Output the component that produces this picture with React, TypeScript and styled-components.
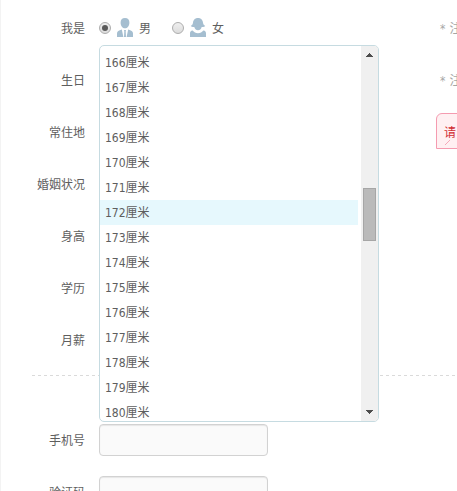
import React from "react";
import styled, { createGlobalStyle } from "styled-components";

const GlobalStyle = createGlobalStyle`
  * { box-sizing: border-box; }
  html, body { margin: 0; background: #fff; overflow: hidden; }
  body {
    font: 12px/18px "DejaVu Sans Condensed", "Noto Sans CJK SC", "Noto Sans", sans-serif;
    color: #5e5e5e;
  }
`;

const Page = styled.main`
  position: relative;
  width: 457px;
  height: 491px;
  padding-top: 2px;
  overflow: hidden;
  border-left: 1px solid #f3f3f3;
`;

const Row = styled.div`
  display: grid;
  grid-template-columns: 84px 324px 1fr;
  column-gap: 14px;
  height: 52px;
  align-items: center;
`;

const Label = styled.label`
  padding-top: 2px;
  text-align: right;
  white-space: nowrap;
`;

const Field = styled.div`
  position: relative;
  display: flex;
  align-items: center;
  height: 52px;
`;

const Hint = styled.span`
  display: flex;
  gap: 4px;
  margin-left: 3px;
  padding-top: 2px;
  color: #a6a6a6;
  white-space: nowrap;
`;

const Option = styled.label<{ $gap: number }>`
  display: flex;
  align-items: center;
  margin-right: ${(p) => p.$gap}px;
  svg { margin: 0 6px; }
`;

const OptionText = styled.span`
  padding-top: 2px;
`;

const Radio = styled.span<{ $checked?: boolean }>`
  display: grid;
  place-items: center;
  width: 12px;
  height: 12px;
  border: 1px solid #adadad;
  border-radius: 50%;
  background: linear-gradient(#efefef, #dcdcdc);
  &::after {
    content: "";
    width: 6px;
    height: 6px;
    border-radius: 50%;
    background: ${(p) => (p.$checked ? "#5a5a5a" : "transparent")};
  }
`;

const ErrorTip = styled.div`
  position: relative;
  width: 60px;
  height: 36px;
  margin: -2px 0 0 -1px;
  padding: 10px 0 0 7px;
  border: 1px solid #f59bb0;
  border-radius: 6px 0 0 0;
  background: #fff0f2;
  color: #d02c32;
  white-space: nowrap;
`;

const TipMark = styled.svg`
  position: absolute;
  left: 8px;
  bottom: 3px;
`;

const Divider = styled.div`
  height: 1px;
  margin: 9px 0 38px 31px;
  background: repeating-linear-gradient(90deg, #dadada 0 3px, transparent 3px 6px);
`;

const Input = styled.input`
  width: 169px;
  height: 32px;
  padding: 0 8px;
  border: 1px solid #d2d2d2;
  border-radius: 4px;
  background: #fafafa;
  box-shadow: inset 0 1px 1px #e6e6e6;
  outline: none;
`;

const Dropdown = styled.div`
  position: absolute;
  z-index: 2;
  top: 43px;
  left: 0;
  display: flex;
  width: 280px;
  height: 377px;
  border: 1px solid #c6dbe1;
  border-radius: 5px;
  background: #fff;
  overflow: hidden;
`;

const List = styled.ul`
  flex: 1;
  margin: 0 3px 0 0;
  padding: 4px 0 0;
  list-style: none;
`;

const Item = styled.li<{ $active: boolean }>`
  height: 25px;
  padding-left: 5px;
  line-height: 27px;
  background: ${(p) => (p.$active ? "#e6f8fd" : "transparent")};
`;

const Scrollbar = styled.div`
  display: flex;
  flex-direction: column;
  align-items: center;
  width: 17px;
  background: #f0f0f0;
`;

const Thumb = styled.div`
  width: 13px;
  height: 53px;
  margin: 125px 0 auto;
  border: 1px solid #a6a6a6;
  background: #bababa;
`;

const Arrow = styled.svg`
  flex: none;
  width: 17px;
  height: 17px;
`;

const ManIcon = () => (
  <svg width="16" height="20" viewBox="0 0 16 20" fill="#a5bed0">
    <path d="M8 0C5 0 3.5 2 3.6 4.7C3.7 7.8 5.6 10.3 8 10.3S12.3 7.8 12.4 4.7C12.5 2 11 0 8 0Z" />
    <path d="M4.8 11.6L6.4 19H0V15.5C0 13.4 1.8 12.5 4.8 11.6ZM11.2 11.6L9.6 19H16V15.5C16 13.4 14.2 12.5 11.2 11.6ZM7 12H9L8.7 13.4L9 19H7L7.3 13.4Z" />
  </svg>
);

const WomanIcon = () => (
  <svg width="16" height="20" viewBox="0 0 16 20" fill="#a5bed0">
    <path d="M8 0C4.7 0 3.2 2.2 3 4.8C2.8 6.5 2 7.2 .8 8C1.8 9 3 9 4.3 8.9C5 11.2 6.2 12.2 8 12.2S11 11.2 11.7 8.9C13 9 14.2 9 15.2 8C14 7.2 13.2 6.5 13 4.8C12.8 2.2 11.3 0 8 0Z" />
    <path d="M2.6 12.6C5 16 11 16 13.4 12.6C15.3 12.9 16 13.8 16 15.5V19H0V15.5C0 13.8 .7 12.9 2.6 12.6Z" />
  </svg>
);

const heights = Array.from({ length: 15 }, (_, i) => 166 + i);

export default function App() {
  return (
    <>
      <GlobalStyle />
      <Page>
        <Row>
          <Label>我是</Label>
          <Field>
            <Option $gap={21}><Radio $checked /><ManIcon /><OptionText>男</OptionText></Option>
            <Option $gap={0}><Radio /><WomanIcon /><OptionText>女</OptionText></Option>
            <Dropdown>
              <List>
                {heights.map((h) => (
                  <Item key={h} $active={h === 172}>{h}厘米</Item>
                ))}
              </List>
              <Scrollbar>
                <Arrow viewBox="0 0 17 17" fill="#4d4d4d" shapeRendering="crispEdges">
                  <path d="M8 7h1v1h1v1h1v1h1v1H5v-1h1V9h1V8h1z" />
                </Arrow>
                <Thumb />
                <Arrow viewBox="0 0 17 17" fill="#4d4d4d" shapeRendering="crispEdges">
                  <path d="M5 6h7v1h-1v1h-1v1H9v1H8V9H7V8H6V7H5z" />
                </Arrow>
              </Scrollbar>
            </Dropdown>
          </Field>
          <Hint><span>*</span><span>注</span></Hint>
        </Row>
        <Row><Label>生日</Label><Field /><Hint><span>*</span><span>注</span></Hint></Row>
        <Row>
          <Label>常住地</Label>
          <Field />
          <ErrorTip>
            请
            <TipMark width="6" height="5" viewBox="0 0 6 5"><path d="M0 5L5 0" stroke="#f5a9b9" /></TipMark>
          </ErrorTip>
        </Row>
        {["婚姻状况", "身高", "学历", "月薪"].map((text) => (
          <Row key={text}><Label>{text}</Label></Row>
        ))}
        <Divider />
        <Row><Label htmlFor="phone">手机号</Label><Field><Input id="phone" /></Field></Row>
        <Row><Label htmlFor="code">验证码</Label><Field><Input id="code" /></Field></Row>
      </Page>
    </>
  );
}
